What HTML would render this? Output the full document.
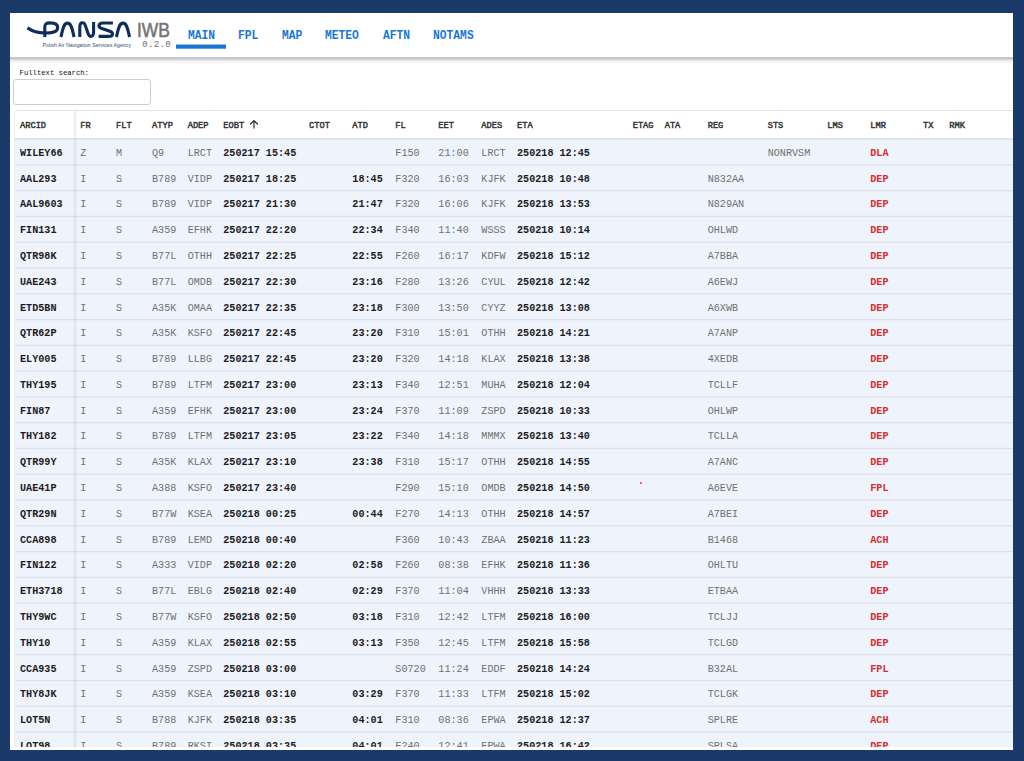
<!DOCTYPE html>
<html><head><meta charset="utf-8"><title>IWB</title>
<style>
html,body{margin:0;padding:0;}
body{width:1024px;height:761px;overflow:hidden;background:#1b3a69;position:relative;font-family:"Liberation Mono",monospace;}
#panel{position:absolute;left:10px;top:13px;width:1003px;height:737px;background:#fff;overflow:hidden;}
#topbar{position:absolute;left:0;top:0;width:1003px;height:44px;background:#fff;z-index:5;}
#shd{position:absolute;left:0;top:44px;width:1003px;height:8px;z-index:5;background:linear-gradient(to bottom,rgba(0,0,0,.20) 0,rgba(0,0,0,.235) 1px,rgba(0,0,0,.22) 2px,rgba(0,0,0,.10) 3px,rgba(0,0,0,.05) 4.5px,rgba(0,0,0,.02) 6px,rgba(0,0,0,0) 8px)}
.nav{position:absolute;top:16.6px;transform:scaleY(1.17);transform-origin:0 50%;font-size:11.3px;font-weight:bold;color:#1976d2;letter-spacing:0;line-height:13px;white-space:nowrap;}
#ul{position:absolute;left:166px;top:31px;width:50px;height:5px;background:linear-gradient(to bottom,rgba(25,118,210,.45) 0,rgba(25,118,210,.45) 1px,#1976d2 1px,#1976d2 4px,rgba(25,118,210,.7) 4px,rgba(25,118,210,.7) 5px);}
#iwb{position:absolute;left:127.1px;top:4.6px;font-family:"Liberation Sans",sans-serif;font-size:20.2px;line-height:24px;color:#757575;-webkit-text-stroke:.6px #757575;transform:scaleX(.861);transform-origin:0 0;letter-spacing:0}
#ver{position:absolute;left:132.3px;top:26.8px;font-size:9px;line-height:10px;color:#6f6f6f;letter-spacing:.35px}
#tag{position:absolute;left:32.6px;top:28.7px;font-family:"Liberation Sans",sans-serif;font-size:5.25px;line-height:6px;color:#354d7a;white-space:nowrap}
#lbl{position:absolute;left:9.6px;top:54.8px;font-size:7.22px;line-height:10px;color:#111;white-space:nowrap;transform:scaleY(1.08);transform-origin:0 50%}
#inp{position:absolute;left:3px;top:66px;width:136px;height:24px;border:1px solid #cdcdcd;border-radius:3px;background:#fff;box-sizing:content-box}
#tbl{position:absolute;left:4px;top:97px;width:1010px;height:637.3px;overflow:hidden;border-left:1px solid #efefef;border-top-left-radius:4px;box-sizing:border-box}
.hr{position:absolute;left:-1px;width:1010px;border-top-left-radius:4px;background:#fff;border-top:1px solid #e3e3e3;border-bottom:2px solid #e3e4e5;box-sizing:border-box}
.r{position:absolute;left:-1px;width:1010px}
.l{position:absolute;left:-1px;width:1010px;height:1px;background:#000}
#body{position:absolute;left:-1px;width:1010px;top:30px;height:620px;background:#eef3fc}
.c{position:absolute;white-space:nowrap;transform:scaleY(1.05);transform-origin:0 73%}
.h{font-weight:normal;color:#333;-webkit-text-stroke:.42px #333;transform:scaleY(1.11);transform-origin:0 62%}
.b{font-weight:bold;color:#1c1c1c;}
.n{color:#707070;}
.r_{font-weight:bold;color:#d32f2f;}
#vsep{position:absolute;left:59px;top:1px;width:3px;height:640px;background:linear-gradient(to right,rgba(0,0,0,.075) 0,rgba(0,0,0,.06) 50%,rgba(0,0,0,0) 100%);z-index:3}
</style></head><body>
<div id="panel">
<div id="topbar"><svg id="logo" style="position:absolute;left:0;top:0" width="140" height="44" viewBox="10 13 140 44">
<g fill="none" stroke="#0e2d5b" stroke-width="3.1" stroke-linecap="butt" stroke-linejoin="round">
<path d="M27.4 27.9 C 32 31, 38 33, 44.8 33 C 52 33, 57.7 31.6, 57.7 27.7 C 57.7 24, 54 22.9, 50 22.9 C 46 22.9, 44.8 24, 44.8 27 L 44.8 37"/>
<path d="M60.9 37 C 62.5 31, 63.2 23.1, 67.5 23.1 C 71.8 23.1, 72.5 31, 74.1 37"/>
<path d="M79.8 37 L79.8 27 C 79.8 21.6, 84 21.9, 85.2 25.2 L 88.3 33.9 C 89.5 37.3, 93.6 37.5, 93.6 32 L 93.6 22.1"/>
<path d="M112.9 23 L 103.4 23 C 100.3 23, 99 24.2, 99 25.8 C 99 27.4, 100.2 28.1, 102.6 28.8 L 109.2 31 C 111.6 31.8, 112.5 32.6, 112.5 33.9 C 112.5 35.5, 111.2 36.4, 108.6 36.4 L 98.6 36.4"/>
<path d="M116.4 37 C 118 31, 118.7 23.1, 123 23.1 C 127.3 23.1, 128 31, 129.6 37"/>
</g></svg><div id="tag">Polish Air Navigation Services Agency</div><div id="iwb">IWB</div><div id="ver">0.2.0</div><div class="nav" style="left:178px">MAIN</div><div class="nav" style="left:228px">FPL</div><div class="nav" style="left:272px">MAP</div><div class="nav" style="left:315px">METEO</div><div class="nav" style="left:373px">AFTN</div><div class="nav" style="left:423px">NOTAMS</div><div id="ul"></div></div>
<div id="shd"></div><div id="lbl">Fulltext search:</div><div id="inp"></div>
<div id="tbl"><div id="vsep"></div>
<div class="hr" style="top:0;height:29.72px"><span class="c h" style="left:6.00px;top:10.26px;font-size:8.7px;line-height:11px">ARCID</span><span class="c h" style="left:66.30px;top:10.26px;font-size:8.7px;line-height:11px">FR</span><span class="c h" style="left:102.00px;top:10.26px;font-size:8.7px;line-height:11px">FLT</span><span class="c h" style="left:138.00px;top:10.26px;font-size:8.7px;line-height:11px">ATYP</span><span class="c h" style="left:173.70px;top:10.26px;font-size:8.7px;line-height:11px">ADEP</span><span class="c h" style="left:209.30px;top:10.26px;font-size:8.7px;line-height:11px">EOBT</span><span class="c h" style="left:295.00px;top:10.26px;font-size:8.7px;line-height:11px">CTOT</span><span class="c h" style="left:338.35px;top:10.26px;font-size:8.7px;line-height:11px">ATD</span><span class="c h" style="left:381.35px;top:10.26px;font-size:8.7px;line-height:11px">FL</span><span class="c h" style="left:424.35px;top:10.26px;font-size:8.7px;line-height:11px">EET</span><span class="c h" style="left:467.35px;top:10.26px;font-size:8.7px;line-height:11px">ADES</span><span class="c h" style="left:503.00px;top:10.26px;font-size:8.7px;line-height:11px">ETA</span><span class="c h" style="left:618.70px;top:10.26px;font-size:8.7px;line-height:11px">ETAG</span><span class="c h" style="left:650.70px;top:10.26px;font-size:8.7px;line-height:11px">ATA</span><span class="c h" style="left:693.70px;top:10.26px;font-size:8.7px;line-height:11px">REG</span><span class="c h" style="left:753.70px;top:10.26px;font-size:8.7px;line-height:11px">STS</span><span class="c h" style="left:813.30px;top:10.26px;font-size:8.7px;line-height:11px">LMS</span><span class="c h" style="left:856.30px;top:10.26px;font-size:8.7px;line-height:11px">LMR</span><span class="c h" style="left:909.00px;top:10.26px;font-size:8.7px;line-height:11px">TX</span><span class="c h" style="left:935.30px;top:10.26px;font-size:8.7px;line-height:11px">RMK</span><svg style="position:absolute;left:235.2px;top:8.2px" width="10" height="11" viewBox="0 0 10 11"><path d="M5 9.6V1.6M1.1 5.5L5 1.6L8.9 5.5" fill="none" stroke="#2a2a2a" stroke-width="1.15"/></svg></div>
<div id="body"></div>
<div class="l" style="top:54px;opacity:0.052"></div><div class="l" style="top:55px;opacity:0.039"></div><div class="l" style="top:79px;opacity:0.001"></div><div class="l" style="top:80px;opacity:0.065"></div><div class="l" style="top:81px;opacity:0.025"></div><div class="l" style="top:105px;opacity:0.016"></div><div class="l" style="top:106px;opacity:0.065"></div><div class="l" style="top:107px;opacity:0.010"></div><div class="l" style="top:131px;opacity:0.030"></div><div class="l" style="top:132px;opacity:0.061"></div><div class="l" style="top:157px;opacity:0.044"></div><div class="l" style="top:158px;opacity:0.047"></div><div class="l" style="top:183px;opacity:0.058"></div><div class="l" style="top:184px;opacity:0.033"></div><div class="l" style="top:208px;opacity:0.008"></div><div class="l" style="top:209px;opacity:0.065"></div><div class="l" style="top:210px;opacity:0.018"></div><div class="l" style="top:234px;opacity:0.022"></div><div class="l" style="top:235px;opacity:0.065"></div><div class="l" style="top:236px;opacity:0.004"></div><div class="l" style="top:260px;opacity:0.036"></div><div class="l" style="top:261px;opacity:0.055"></div><div class="l" style="top:286px;opacity:0.051"></div><div class="l" style="top:287px;opacity:0.040"></div><div class="l" style="top:312px;opacity:0.065"></div><div class="l" style="top:313px;opacity:0.026"></div><div class="l" style="top:337px;opacity:0.014"></div><div class="l" style="top:338px;opacity:0.065"></div><div class="l" style="top:339px;opacity:0.012"></div><div class="l" style="top:363px;opacity:0.029"></div><div class="l" style="top:364px;opacity:0.062"></div><div class="l" style="top:389px;opacity:0.043"></div><div class="l" style="top:390px;opacity:0.048"></div><div class="l" style="top:415px;opacity:0.057"></div><div class="l" style="top:416px;opacity:0.034"></div><div class="l" style="top:440px;opacity:0.006"></div><div class="l" style="top:441px;opacity:0.065"></div><div class="l" style="top:442px;opacity:0.020"></div><div class="l" style="top:466px;opacity:0.021"></div><div class="l" style="top:467px;opacity:0.065"></div><div class="l" style="top:468px;opacity:0.005"></div><div class="l" style="top:492px;opacity:0.035"></div><div class="l" style="top:493px;opacity:0.056"></div><div class="l" style="top:518px;opacity:0.049"></div><div class="l" style="top:519px;opacity:0.042"></div><div class="l" style="top:544px;opacity:0.064"></div><div class="l" style="top:545px;opacity:0.027"></div><div class="l" style="top:569px;opacity:0.013"></div><div class="l" style="top:570px;opacity:0.065"></div><div class="l" style="top:571px;opacity:0.013"></div><div class="l" style="top:595px;opacity:0.027"></div><div class="l" style="top:596px;opacity:0.064"></div><div class="l" style="top:621px;opacity:0.042"></div><div class="l" style="top:622px;opacity:0.049"></div><div class="l" style="top:647px;opacity:0.056"></div><div class="l" style="top:648px;opacity:0.035"></div>
<div class="r" style="top:29.72px;height:25.78px"><span class="c b" style="left:6.00px;top:8.19px;font-size:10.15px;line-height:12px">WILEY66</span><span class="c n" style="left:66.30px;top:8.19px;font-size:10.15px;line-height:12px">Z</span><span class="c n" style="left:102.00px;top:8.19px;font-size:10.15px;line-height:12px">M</span><span class="c n" style="left:138.00px;top:8.19px;font-size:10.15px;line-height:12px">Q9</span><span class="c n" style="left:173.70px;top:8.19px;font-size:10.15px;line-height:12px">LRCT</span><span class="c b" style="left:209.30px;top:8.19px;font-size:10.15px;line-height:12px">250217 15:45</span><span class="c n" style="left:381.35px;top:8.19px;font-size:10.15px;line-height:12px">F150</span><span class="c n" style="left:424.35px;top:8.19px;font-size:10.15px;line-height:12px">21:00</span><span class="c n" style="left:467.35px;top:8.19px;font-size:10.15px;line-height:12px">LRCT</span><span class="c b" style="left:503.00px;top:8.19px;font-size:10.15px;line-height:12px">250218 12:45</span><span class="c n" style="left:753.70px;top:8.19px;font-size:10.15px;line-height:12px">NONRVSM</span><span class="c r_" style="left:856.30px;top:8.19px;font-size:10.15px;line-height:12px">DLA</span></div>
<div class="r" style="top:55.50px;height:25.78px"><span class="c b" style="left:6.00px;top:8.19px;font-size:10.15px;line-height:12px">AAL293</span><span class="c n" style="left:66.30px;top:8.19px;font-size:10.15px;line-height:12px">I</span><span class="c n" style="left:102.00px;top:8.19px;font-size:10.15px;line-height:12px">S</span><span class="c n" style="left:138.00px;top:8.19px;font-size:10.15px;line-height:12px">B789</span><span class="c n" style="left:173.70px;top:8.19px;font-size:10.15px;line-height:12px">VIDP</span><span class="c b" style="left:209.30px;top:8.19px;font-size:10.15px;line-height:12px">250217 18:25</span><span class="c b" style="left:338.35px;top:8.19px;font-size:10.15px;line-height:12px">18:45</span><span class="c n" style="left:381.35px;top:8.19px;font-size:10.15px;line-height:12px">F320</span><span class="c n" style="left:424.35px;top:8.19px;font-size:10.15px;line-height:12px">16:03</span><span class="c n" style="left:467.35px;top:8.19px;font-size:10.15px;line-height:12px">KJFK</span><span class="c b" style="left:503.00px;top:8.19px;font-size:10.15px;line-height:12px">250218 10:48</span><span class="c n" style="left:693.70px;top:8.19px;font-size:10.15px;line-height:12px">N832AA</span><span class="c r_" style="left:856.30px;top:8.19px;font-size:10.15px;line-height:12px">DEP</span></div>
<div class="r" style="top:81.28px;height:25.78px"><span class="c b" style="left:6.00px;top:8.19px;font-size:10.15px;line-height:12px">AAL9603</span><span class="c n" style="left:66.30px;top:8.19px;font-size:10.15px;line-height:12px">I</span><span class="c n" style="left:102.00px;top:8.19px;font-size:10.15px;line-height:12px">S</span><span class="c n" style="left:138.00px;top:8.19px;font-size:10.15px;line-height:12px">B789</span><span class="c n" style="left:173.70px;top:8.19px;font-size:10.15px;line-height:12px">VIDP</span><span class="c b" style="left:209.30px;top:8.19px;font-size:10.15px;line-height:12px">250217 21:30</span><span class="c b" style="left:338.35px;top:8.19px;font-size:10.15px;line-height:12px">21:47</span><span class="c n" style="left:381.35px;top:8.19px;font-size:10.15px;line-height:12px">F320</span><span class="c n" style="left:424.35px;top:8.19px;font-size:10.15px;line-height:12px">16:06</span><span class="c n" style="left:467.35px;top:8.19px;font-size:10.15px;line-height:12px">KJFK</span><span class="c b" style="left:503.00px;top:8.19px;font-size:10.15px;line-height:12px">250218 13:53</span><span class="c n" style="left:693.70px;top:8.19px;font-size:10.15px;line-height:12px">N829AN</span><span class="c r_" style="left:856.30px;top:8.19px;font-size:10.15px;line-height:12px">DEP</span></div>
<div class="r" style="top:107.06px;height:25.78px"><span class="c b" style="left:6.00px;top:8.19px;font-size:10.15px;line-height:12px">FIN131</span><span class="c n" style="left:66.30px;top:8.19px;font-size:10.15px;line-height:12px">I</span><span class="c n" style="left:102.00px;top:8.19px;font-size:10.15px;line-height:12px">S</span><span class="c n" style="left:138.00px;top:8.19px;font-size:10.15px;line-height:12px">A359</span><span class="c n" style="left:173.70px;top:8.19px;font-size:10.15px;line-height:12px">EFHK</span><span class="c b" style="left:209.30px;top:8.19px;font-size:10.15px;line-height:12px">250217 22:20</span><span class="c b" style="left:338.35px;top:8.19px;font-size:10.15px;line-height:12px">22:34</span><span class="c n" style="left:381.35px;top:8.19px;font-size:10.15px;line-height:12px">F340</span><span class="c n" style="left:424.35px;top:8.19px;font-size:10.15px;line-height:12px">11:40</span><span class="c n" style="left:467.35px;top:8.19px;font-size:10.15px;line-height:12px">WSSS</span><span class="c b" style="left:503.00px;top:8.19px;font-size:10.15px;line-height:12px">250218 10:14</span><span class="c n" style="left:693.70px;top:8.19px;font-size:10.15px;line-height:12px">OHLWD</span><span class="c r_" style="left:856.30px;top:8.19px;font-size:10.15px;line-height:12px">DEP</span></div>
<div class="r" style="top:132.84px;height:25.78px"><span class="c b" style="left:6.00px;top:8.19px;font-size:10.15px;line-height:12px">QTR98K</span><span class="c n" style="left:66.30px;top:8.19px;font-size:10.15px;line-height:12px">I</span><span class="c n" style="left:102.00px;top:8.19px;font-size:10.15px;line-height:12px">S</span><span class="c n" style="left:138.00px;top:8.19px;font-size:10.15px;line-height:12px">B77L</span><span class="c n" style="left:173.70px;top:8.19px;font-size:10.15px;line-height:12px">OTHH</span><span class="c b" style="left:209.30px;top:8.19px;font-size:10.15px;line-height:12px">250217 22:25</span><span class="c b" style="left:338.35px;top:8.19px;font-size:10.15px;line-height:12px">22:55</span><span class="c n" style="left:381.35px;top:8.19px;font-size:10.15px;line-height:12px">F260</span><span class="c n" style="left:424.35px;top:8.19px;font-size:10.15px;line-height:12px">16:17</span><span class="c n" style="left:467.35px;top:8.19px;font-size:10.15px;line-height:12px">KDFW</span><span class="c b" style="left:503.00px;top:8.19px;font-size:10.15px;line-height:12px">250218 15:12</span><span class="c n" style="left:693.70px;top:8.19px;font-size:10.15px;line-height:12px">A7BBA</span><span class="c r_" style="left:856.30px;top:8.19px;font-size:10.15px;line-height:12px">DEP</span></div>
<div class="r" style="top:158.62px;height:25.78px"><span class="c b" style="left:6.00px;top:8.19px;font-size:10.15px;line-height:12px">UAE243</span><span class="c n" style="left:66.30px;top:8.19px;font-size:10.15px;line-height:12px">I</span><span class="c n" style="left:102.00px;top:8.19px;font-size:10.15px;line-height:12px">S</span><span class="c n" style="left:138.00px;top:8.19px;font-size:10.15px;line-height:12px">B77L</span><span class="c n" style="left:173.70px;top:8.19px;font-size:10.15px;line-height:12px">OMDB</span><span class="c b" style="left:209.30px;top:8.19px;font-size:10.15px;line-height:12px">250217 22:30</span><span class="c b" style="left:338.35px;top:8.19px;font-size:10.15px;line-height:12px">23:16</span><span class="c n" style="left:381.35px;top:8.19px;font-size:10.15px;line-height:12px">F280</span><span class="c n" style="left:424.35px;top:8.19px;font-size:10.15px;line-height:12px">13:26</span><span class="c n" style="left:467.35px;top:8.19px;font-size:10.15px;line-height:12px">CYUL</span><span class="c b" style="left:503.00px;top:8.19px;font-size:10.15px;line-height:12px">250218 12:42</span><span class="c n" style="left:693.70px;top:8.19px;font-size:10.15px;line-height:12px">A6EWJ</span><span class="c r_" style="left:856.30px;top:8.19px;font-size:10.15px;line-height:12px">DEP</span></div>
<div class="r" style="top:184.40px;height:25.78px"><span class="c b" style="left:6.00px;top:8.19px;font-size:10.15px;line-height:12px">ETD5BN</span><span class="c n" style="left:66.30px;top:8.19px;font-size:10.15px;line-height:12px">I</span><span class="c n" style="left:102.00px;top:8.19px;font-size:10.15px;line-height:12px">S</span><span class="c n" style="left:138.00px;top:8.19px;font-size:10.15px;line-height:12px">A35K</span><span class="c n" style="left:173.70px;top:8.19px;font-size:10.15px;line-height:12px">OMAA</span><span class="c b" style="left:209.30px;top:8.19px;font-size:10.15px;line-height:12px">250217 22:35</span><span class="c b" style="left:338.35px;top:8.19px;font-size:10.15px;line-height:12px">23:18</span><span class="c n" style="left:381.35px;top:8.19px;font-size:10.15px;line-height:12px">F300</span><span class="c n" style="left:424.35px;top:8.19px;font-size:10.15px;line-height:12px">13:50</span><span class="c n" style="left:467.35px;top:8.19px;font-size:10.15px;line-height:12px">CYYZ</span><span class="c b" style="left:503.00px;top:8.19px;font-size:10.15px;line-height:12px">250218 13:08</span><span class="c n" style="left:693.70px;top:8.19px;font-size:10.15px;line-height:12px">A6XWB</span><span class="c r_" style="left:856.30px;top:8.19px;font-size:10.15px;line-height:12px">DEP</span></div>
<div class="r" style="top:210.18px;height:25.78px"><span class="c b" style="left:6.00px;top:8.19px;font-size:10.15px;line-height:12px">QTR62P</span><span class="c n" style="left:66.30px;top:8.19px;font-size:10.15px;line-height:12px">I</span><span class="c n" style="left:102.00px;top:8.19px;font-size:10.15px;line-height:12px">S</span><span class="c n" style="left:138.00px;top:8.19px;font-size:10.15px;line-height:12px">A35K</span><span class="c n" style="left:173.70px;top:8.19px;font-size:10.15px;line-height:12px">KSFO</span><span class="c b" style="left:209.30px;top:8.19px;font-size:10.15px;line-height:12px">250217 22:45</span><span class="c b" style="left:338.35px;top:8.19px;font-size:10.15px;line-height:12px">23:20</span><span class="c n" style="left:381.35px;top:8.19px;font-size:10.15px;line-height:12px">F310</span><span class="c n" style="left:424.35px;top:8.19px;font-size:10.15px;line-height:12px">15:01</span><span class="c n" style="left:467.35px;top:8.19px;font-size:10.15px;line-height:12px">OTHH</span><span class="c b" style="left:503.00px;top:8.19px;font-size:10.15px;line-height:12px">250218 14:21</span><span class="c n" style="left:693.70px;top:8.19px;font-size:10.15px;line-height:12px">A7ANP</span><span class="c r_" style="left:856.30px;top:8.19px;font-size:10.15px;line-height:12px">DEP</span></div>
<div class="r" style="top:235.96px;height:25.78px"><span class="c b" style="left:6.00px;top:8.19px;font-size:10.15px;line-height:12px">ELY005</span><span class="c n" style="left:66.30px;top:8.19px;font-size:10.15px;line-height:12px">I</span><span class="c n" style="left:102.00px;top:8.19px;font-size:10.15px;line-height:12px">S</span><span class="c n" style="left:138.00px;top:8.19px;font-size:10.15px;line-height:12px">B789</span><span class="c n" style="left:173.70px;top:8.19px;font-size:10.15px;line-height:12px">LLBG</span><span class="c b" style="left:209.30px;top:8.19px;font-size:10.15px;line-height:12px">250217 22:45</span><span class="c b" style="left:338.35px;top:8.19px;font-size:10.15px;line-height:12px">23:20</span><span class="c n" style="left:381.35px;top:8.19px;font-size:10.15px;line-height:12px">F320</span><span class="c n" style="left:424.35px;top:8.19px;font-size:10.15px;line-height:12px">14:18</span><span class="c n" style="left:467.35px;top:8.19px;font-size:10.15px;line-height:12px">KLAX</span><span class="c b" style="left:503.00px;top:8.19px;font-size:10.15px;line-height:12px">250218 13:38</span><span class="c n" style="left:693.70px;top:8.19px;font-size:10.15px;line-height:12px">4XEDB</span><span class="c r_" style="left:856.30px;top:8.19px;font-size:10.15px;line-height:12px">DEP</span></div>
<div class="r" style="top:261.74px;height:25.78px"><span class="c b" style="left:6.00px;top:8.19px;font-size:10.15px;line-height:12px">THY195</span><span class="c n" style="left:66.30px;top:8.19px;font-size:10.15px;line-height:12px">I</span><span class="c n" style="left:102.00px;top:8.19px;font-size:10.15px;line-height:12px">S</span><span class="c n" style="left:138.00px;top:8.19px;font-size:10.15px;line-height:12px">B789</span><span class="c n" style="left:173.70px;top:8.19px;font-size:10.15px;line-height:12px">LTFM</span><span class="c b" style="left:209.30px;top:8.19px;font-size:10.15px;line-height:12px">250217 23:00</span><span class="c b" style="left:338.35px;top:8.19px;font-size:10.15px;line-height:12px">23:13</span><span class="c n" style="left:381.35px;top:8.19px;font-size:10.15px;line-height:12px">F340</span><span class="c n" style="left:424.35px;top:8.19px;font-size:10.15px;line-height:12px">12:51</span><span class="c n" style="left:467.35px;top:8.19px;font-size:10.15px;line-height:12px">MUHA</span><span class="c b" style="left:503.00px;top:8.19px;font-size:10.15px;line-height:12px">250218 12:04</span><span class="c n" style="left:693.70px;top:8.19px;font-size:10.15px;line-height:12px">TCLLF</span><span class="c r_" style="left:856.30px;top:8.19px;font-size:10.15px;line-height:12px">DEP</span></div>
<div class="r" style="top:287.52px;height:25.78px"><span class="c b" style="left:6.00px;top:8.19px;font-size:10.15px;line-height:12px">FIN87</span><span class="c n" style="left:66.30px;top:8.19px;font-size:10.15px;line-height:12px">I</span><span class="c n" style="left:102.00px;top:8.19px;font-size:10.15px;line-height:12px">S</span><span class="c n" style="left:138.00px;top:8.19px;font-size:10.15px;line-height:12px">A359</span><span class="c n" style="left:173.70px;top:8.19px;font-size:10.15px;line-height:12px">EFHK</span><span class="c b" style="left:209.30px;top:8.19px;font-size:10.15px;line-height:12px">250217 23:00</span><span class="c b" style="left:338.35px;top:8.19px;font-size:10.15px;line-height:12px">23:24</span><span class="c n" style="left:381.35px;top:8.19px;font-size:10.15px;line-height:12px">F370</span><span class="c n" style="left:424.35px;top:8.19px;font-size:10.15px;line-height:12px">11:09</span><span class="c n" style="left:467.35px;top:8.19px;font-size:10.15px;line-height:12px">ZSPD</span><span class="c b" style="left:503.00px;top:8.19px;font-size:10.15px;line-height:12px">250218 10:33</span><span class="c n" style="left:693.70px;top:8.19px;font-size:10.15px;line-height:12px">OHLWP</span><span class="c r_" style="left:856.30px;top:8.19px;font-size:10.15px;line-height:12px">DEP</span></div>
<div class="r" style="top:313.30px;height:25.78px"><span class="c b" style="left:6.00px;top:8.19px;font-size:10.15px;line-height:12px">THY182</span><span class="c n" style="left:66.30px;top:8.19px;font-size:10.15px;line-height:12px">I</span><span class="c n" style="left:102.00px;top:8.19px;font-size:10.15px;line-height:12px">S</span><span class="c n" style="left:138.00px;top:8.19px;font-size:10.15px;line-height:12px">B789</span><span class="c n" style="left:173.70px;top:8.19px;font-size:10.15px;line-height:12px">LTFM</span><span class="c b" style="left:209.30px;top:8.19px;font-size:10.15px;line-height:12px">250217 23:05</span><span class="c b" style="left:338.35px;top:8.19px;font-size:10.15px;line-height:12px">23:22</span><span class="c n" style="left:381.35px;top:8.19px;font-size:10.15px;line-height:12px">F340</span><span class="c n" style="left:424.35px;top:8.19px;font-size:10.15px;line-height:12px">14:18</span><span class="c n" style="left:467.35px;top:8.19px;font-size:10.15px;line-height:12px">MMMX</span><span class="c b" style="left:503.00px;top:8.19px;font-size:10.15px;line-height:12px">250218 13:40</span><span class="c n" style="left:693.70px;top:8.19px;font-size:10.15px;line-height:12px">TCLLA</span><span class="c r_" style="left:856.30px;top:8.19px;font-size:10.15px;line-height:12px">DEP</span></div>
<div class="r" style="top:339.08px;height:25.78px"><span class="c b" style="left:6.00px;top:8.19px;font-size:10.15px;line-height:12px">QTR99Y</span><span class="c n" style="left:66.30px;top:8.19px;font-size:10.15px;line-height:12px">I</span><span class="c n" style="left:102.00px;top:8.19px;font-size:10.15px;line-height:12px">S</span><span class="c n" style="left:138.00px;top:8.19px;font-size:10.15px;line-height:12px">A35K</span><span class="c n" style="left:173.70px;top:8.19px;font-size:10.15px;line-height:12px">KLAX</span><span class="c b" style="left:209.30px;top:8.19px;font-size:10.15px;line-height:12px">250217 23:10</span><span class="c b" style="left:338.35px;top:8.19px;font-size:10.15px;line-height:12px">23:38</span><span class="c n" style="left:381.35px;top:8.19px;font-size:10.15px;line-height:12px">F310</span><span class="c n" style="left:424.35px;top:8.19px;font-size:10.15px;line-height:12px">15:17</span><span class="c n" style="left:467.35px;top:8.19px;font-size:10.15px;line-height:12px">OTHH</span><span class="c b" style="left:503.00px;top:8.19px;font-size:10.15px;line-height:12px">250218 14:55</span><span class="c n" style="left:693.70px;top:8.19px;font-size:10.15px;line-height:12px">A7ANC</span><span class="c r_" style="left:856.30px;top:8.19px;font-size:10.15px;line-height:12px">DEP</span></div>
<div class="r" style="top:364.86px;height:25.78px"><span class="c b" style="left:6.00px;top:8.19px;font-size:10.15px;line-height:12px">UAE41P</span><span class="c n" style="left:66.30px;top:8.19px;font-size:10.15px;line-height:12px">I</span><span class="c n" style="left:102.00px;top:8.19px;font-size:10.15px;line-height:12px">S</span><span class="c n" style="left:138.00px;top:8.19px;font-size:10.15px;line-height:12px">A388</span><span class="c n" style="left:173.70px;top:8.19px;font-size:10.15px;line-height:12px">KSFO</span><span class="c b" style="left:209.30px;top:8.19px;font-size:10.15px;line-height:12px">250217 23:40</span><span class="c n" style="left:381.35px;top:8.19px;font-size:10.15px;line-height:12px">F290</span><span class="c n" style="left:424.35px;top:8.19px;font-size:10.15px;line-height:12px">15:10</span><span class="c n" style="left:467.35px;top:8.19px;font-size:10.15px;line-height:12px">OMDB</span><span class="c b" style="left:503.00px;top:8.19px;font-size:10.15px;line-height:12px">250218 14:50</span><span class="c n" style="left:693.70px;top:8.19px;font-size:10.15px;line-height:12px">A6EVE</span><span class="c r_" style="left:856.30px;top:8.19px;font-size:10.15px;line-height:12px">FPL</span><span style="position:absolute;left:626px;top:6.8px;width:2px;height:2px;background:#e53935;border-radius:1px"></span></div>
<div class="r" style="top:390.64px;height:25.78px"><span class="c b" style="left:6.00px;top:8.19px;font-size:10.15px;line-height:12px">QTR29N</span><span class="c n" style="left:66.30px;top:8.19px;font-size:10.15px;line-height:12px">I</span><span class="c n" style="left:102.00px;top:8.19px;font-size:10.15px;line-height:12px">S</span><span class="c n" style="left:138.00px;top:8.19px;font-size:10.15px;line-height:12px">B77W</span><span class="c n" style="left:173.70px;top:8.19px;font-size:10.15px;line-height:12px">KSEA</span><span class="c b" style="left:209.30px;top:8.19px;font-size:10.15px;line-height:12px">250218 00:25</span><span class="c b" style="left:338.35px;top:8.19px;font-size:10.15px;line-height:12px">00:44</span><span class="c n" style="left:381.35px;top:8.19px;font-size:10.15px;line-height:12px">F270</span><span class="c n" style="left:424.35px;top:8.19px;font-size:10.15px;line-height:12px">14:13</span><span class="c n" style="left:467.35px;top:8.19px;font-size:10.15px;line-height:12px">OTHH</span><span class="c b" style="left:503.00px;top:8.19px;font-size:10.15px;line-height:12px">250218 14:57</span><span class="c n" style="left:693.70px;top:8.19px;font-size:10.15px;line-height:12px">A7BEI</span><span class="c r_" style="left:856.30px;top:8.19px;font-size:10.15px;line-height:12px">DEP</span></div>
<div class="r" style="top:416.42px;height:25.78px"><span class="c b" style="left:6.00px;top:8.19px;font-size:10.15px;line-height:12px">CCA898</span><span class="c n" style="left:66.30px;top:8.19px;font-size:10.15px;line-height:12px">I</span><span class="c n" style="left:102.00px;top:8.19px;font-size:10.15px;line-height:12px">S</span><span class="c n" style="left:138.00px;top:8.19px;font-size:10.15px;line-height:12px">B789</span><span class="c n" style="left:173.70px;top:8.19px;font-size:10.15px;line-height:12px">LEMD</span><span class="c b" style="left:209.30px;top:8.19px;font-size:10.15px;line-height:12px">250218 00:40</span><span class="c n" style="left:381.35px;top:8.19px;font-size:10.15px;line-height:12px">F360</span><span class="c n" style="left:424.35px;top:8.19px;font-size:10.15px;line-height:12px">10:43</span><span class="c n" style="left:467.35px;top:8.19px;font-size:10.15px;line-height:12px">ZBAA</span><span class="c b" style="left:503.00px;top:8.19px;font-size:10.15px;line-height:12px">250218 11:23</span><span class="c n" style="left:693.70px;top:8.19px;font-size:10.15px;line-height:12px">B1468</span><span class="c r_" style="left:856.30px;top:8.19px;font-size:10.15px;line-height:12px">ACH</span></div>
<div class="r" style="top:442.20px;height:25.78px"><span class="c b" style="left:6.00px;top:8.19px;font-size:10.15px;line-height:12px">FIN122</span><span class="c n" style="left:66.30px;top:8.19px;font-size:10.15px;line-height:12px">I</span><span class="c n" style="left:102.00px;top:8.19px;font-size:10.15px;line-height:12px">S</span><span class="c n" style="left:138.00px;top:8.19px;font-size:10.15px;line-height:12px">A333</span><span class="c n" style="left:173.70px;top:8.19px;font-size:10.15px;line-height:12px">VIDP</span><span class="c b" style="left:209.30px;top:8.19px;font-size:10.15px;line-height:12px">250218 02:20</span><span class="c b" style="left:338.35px;top:8.19px;font-size:10.15px;line-height:12px">02:58</span><span class="c n" style="left:381.35px;top:8.19px;font-size:10.15px;line-height:12px">F260</span><span class="c n" style="left:424.35px;top:8.19px;font-size:10.15px;line-height:12px">08:38</span><span class="c n" style="left:467.35px;top:8.19px;font-size:10.15px;line-height:12px">EFHK</span><span class="c b" style="left:503.00px;top:8.19px;font-size:10.15px;line-height:12px">250218 11:36</span><span class="c n" style="left:693.70px;top:8.19px;font-size:10.15px;line-height:12px">OHLTU</span><span class="c r_" style="left:856.30px;top:8.19px;font-size:10.15px;line-height:12px">DEP</span></div>
<div class="r" style="top:467.98px;height:25.78px"><span class="c b" style="left:6.00px;top:8.19px;font-size:10.15px;line-height:12px">ETH3718</span><span class="c n" style="left:66.30px;top:8.19px;font-size:10.15px;line-height:12px">I</span><span class="c n" style="left:102.00px;top:8.19px;font-size:10.15px;line-height:12px">S</span><span class="c n" style="left:138.00px;top:8.19px;font-size:10.15px;line-height:12px">B77L</span><span class="c n" style="left:173.70px;top:8.19px;font-size:10.15px;line-height:12px">EBLG</span><span class="c b" style="left:209.30px;top:8.19px;font-size:10.15px;line-height:12px">250218 02:40</span><span class="c b" style="left:338.35px;top:8.19px;font-size:10.15px;line-height:12px">02:29</span><span class="c n" style="left:381.35px;top:8.19px;font-size:10.15px;line-height:12px">F370</span><span class="c n" style="left:424.35px;top:8.19px;font-size:10.15px;line-height:12px">11:04</span><span class="c n" style="left:467.35px;top:8.19px;font-size:10.15px;line-height:12px">VHHH</span><span class="c b" style="left:503.00px;top:8.19px;font-size:10.15px;line-height:12px">250218 13:33</span><span class="c n" style="left:693.70px;top:8.19px;font-size:10.15px;line-height:12px">ETBAA</span><span class="c r_" style="left:856.30px;top:8.19px;font-size:10.15px;line-height:12px">DEP</span></div>
<div class="r" style="top:493.76px;height:25.78px"><span class="c b" style="left:6.00px;top:8.19px;font-size:10.15px;line-height:12px">THY9WC</span><span class="c n" style="left:66.30px;top:8.19px;font-size:10.15px;line-height:12px">I</span><span class="c n" style="left:102.00px;top:8.19px;font-size:10.15px;line-height:12px">S</span><span class="c n" style="left:138.00px;top:8.19px;font-size:10.15px;line-height:12px">B77W</span><span class="c n" style="left:173.70px;top:8.19px;font-size:10.15px;line-height:12px">KSFO</span><span class="c b" style="left:209.30px;top:8.19px;font-size:10.15px;line-height:12px">250218 02:50</span><span class="c b" style="left:338.35px;top:8.19px;font-size:10.15px;line-height:12px">03:18</span><span class="c n" style="left:381.35px;top:8.19px;font-size:10.15px;line-height:12px">F310</span><span class="c n" style="left:424.35px;top:8.19px;font-size:10.15px;line-height:12px">12:42</span><span class="c n" style="left:467.35px;top:8.19px;font-size:10.15px;line-height:12px">LTFM</span><span class="c b" style="left:503.00px;top:8.19px;font-size:10.15px;line-height:12px">250218 16:00</span><span class="c n" style="left:693.70px;top:8.19px;font-size:10.15px;line-height:12px">TCLJJ</span><span class="c r_" style="left:856.30px;top:8.19px;font-size:10.15px;line-height:12px">DEP</span></div>
<div class="r" style="top:519.54px;height:25.78px"><span class="c b" style="left:6.00px;top:8.19px;font-size:10.15px;line-height:12px">THY10</span><span class="c n" style="left:66.30px;top:8.19px;font-size:10.15px;line-height:12px">I</span><span class="c n" style="left:102.00px;top:8.19px;font-size:10.15px;line-height:12px">S</span><span class="c n" style="left:138.00px;top:8.19px;font-size:10.15px;line-height:12px">A359</span><span class="c n" style="left:173.70px;top:8.19px;font-size:10.15px;line-height:12px">KLAX</span><span class="c b" style="left:209.30px;top:8.19px;font-size:10.15px;line-height:12px">250218 02:55</span><span class="c b" style="left:338.35px;top:8.19px;font-size:10.15px;line-height:12px">03:13</span><span class="c n" style="left:381.35px;top:8.19px;font-size:10.15px;line-height:12px">F350</span><span class="c n" style="left:424.35px;top:8.19px;font-size:10.15px;line-height:12px">12:45</span><span class="c n" style="left:467.35px;top:8.19px;font-size:10.15px;line-height:12px">LTFM</span><span class="c b" style="left:503.00px;top:8.19px;font-size:10.15px;line-height:12px">250218 15:58</span><span class="c n" style="left:693.70px;top:8.19px;font-size:10.15px;line-height:12px">TCLGD</span><span class="c r_" style="left:856.30px;top:8.19px;font-size:10.15px;line-height:12px">DEP</span></div>
<div class="r" style="top:545.32px;height:25.78px"><span class="c b" style="left:6.00px;top:8.19px;font-size:10.15px;line-height:12px">CCA935</span><span class="c n" style="left:66.30px;top:8.19px;font-size:10.15px;line-height:12px">I</span><span class="c n" style="left:102.00px;top:8.19px;font-size:10.15px;line-height:12px">S</span><span class="c n" style="left:138.00px;top:8.19px;font-size:10.15px;line-height:12px">A359</span><span class="c n" style="left:173.70px;top:8.19px;font-size:10.15px;line-height:12px">ZSPD</span><span class="c b" style="left:209.30px;top:8.19px;font-size:10.15px;line-height:12px">250218 03:00</span><span class="c n" style="left:381.35px;top:8.19px;font-size:10.15px;line-height:12px">S0720</span><span class="c n" style="left:424.35px;top:8.19px;font-size:10.15px;line-height:12px">11:24</span><span class="c n" style="left:467.35px;top:8.19px;font-size:10.15px;line-height:12px">EDDF</span><span class="c b" style="left:503.00px;top:8.19px;font-size:10.15px;line-height:12px">250218 14:24</span><span class="c n" style="left:693.70px;top:8.19px;font-size:10.15px;line-height:12px">B32AL</span><span class="c r_" style="left:856.30px;top:8.19px;font-size:10.15px;line-height:12px">FPL</span></div>
<div class="r" style="top:571.10px;height:25.78px"><span class="c b" style="left:6.00px;top:8.19px;font-size:10.15px;line-height:12px">THY8JK</span><span class="c n" style="left:66.30px;top:8.19px;font-size:10.15px;line-height:12px">I</span><span class="c n" style="left:102.00px;top:8.19px;font-size:10.15px;line-height:12px">S</span><span class="c n" style="left:138.00px;top:8.19px;font-size:10.15px;line-height:12px">A359</span><span class="c n" style="left:173.70px;top:8.19px;font-size:10.15px;line-height:12px">KSEA</span><span class="c b" style="left:209.30px;top:8.19px;font-size:10.15px;line-height:12px">250218 03:10</span><span class="c b" style="left:338.35px;top:8.19px;font-size:10.15px;line-height:12px">03:29</span><span class="c n" style="left:381.35px;top:8.19px;font-size:10.15px;line-height:12px">F370</span><span class="c n" style="left:424.35px;top:8.19px;font-size:10.15px;line-height:12px">11:33</span><span class="c n" style="left:467.35px;top:8.19px;font-size:10.15px;line-height:12px">LTFM</span><span class="c b" style="left:503.00px;top:8.19px;font-size:10.15px;line-height:12px">250218 15:02</span><span class="c n" style="left:693.70px;top:8.19px;font-size:10.15px;line-height:12px">TCLGK</span><span class="c r_" style="left:856.30px;top:8.19px;font-size:10.15px;line-height:12px">DEP</span></div>
<div class="r" style="top:596.88px;height:25.78px"><span class="c b" style="left:6.00px;top:8.19px;font-size:10.15px;line-height:12px">LOT5N</span><span class="c n" style="left:66.30px;top:8.19px;font-size:10.15px;line-height:12px">I</span><span class="c n" style="left:102.00px;top:8.19px;font-size:10.15px;line-height:12px">S</span><span class="c n" style="left:138.00px;top:8.19px;font-size:10.15px;line-height:12px">B788</span><span class="c n" style="left:173.70px;top:8.19px;font-size:10.15px;line-height:12px">KJFK</span><span class="c b" style="left:209.30px;top:8.19px;font-size:10.15px;line-height:12px">250218 03:35</span><span class="c b" style="left:338.35px;top:8.19px;font-size:10.15px;line-height:12px">04:01</span><span class="c n" style="left:381.35px;top:8.19px;font-size:10.15px;line-height:12px">F310</span><span class="c n" style="left:424.35px;top:8.19px;font-size:10.15px;line-height:12px">08:36</span><span class="c n" style="left:467.35px;top:8.19px;font-size:10.15px;line-height:12px">EPWA</span><span class="c b" style="left:503.00px;top:8.19px;font-size:10.15px;line-height:12px">250218 12:37</span><span class="c n" style="left:693.70px;top:8.19px;font-size:10.15px;line-height:12px">SPLRE</span><span class="c r_" style="left:856.30px;top:8.19px;font-size:10.15px;line-height:12px">ACH</span></div>
<div class="r" style="top:622.66px;height:25.78px"><span class="c b" style="left:6.00px;top:8.19px;font-size:10.15px;line-height:12px">LOT98</span><span class="c n" style="left:66.30px;top:8.19px;font-size:10.15px;line-height:12px">I</span><span class="c n" style="left:102.00px;top:8.19px;font-size:10.15px;line-height:12px">S</span><span class="c n" style="left:138.00px;top:8.19px;font-size:10.15px;line-height:12px">B789</span><span class="c n" style="left:173.70px;top:8.19px;font-size:10.15px;line-height:12px">RKSI</span><span class="c b" style="left:209.30px;top:8.19px;font-size:10.15px;line-height:12px">250218 03:35</span><span class="c b" style="left:338.35px;top:8.19px;font-size:10.15px;line-height:12px">04:01</span><span class="c n" style="left:381.35px;top:8.19px;font-size:10.15px;line-height:12px">F240</span><span class="c n" style="left:424.35px;top:8.19px;font-size:10.15px;line-height:12px">12:41</span><span class="c n" style="left:467.35px;top:8.19px;font-size:10.15px;line-height:12px">EPWA</span><span class="c b" style="left:503.00px;top:8.19px;font-size:10.15px;line-height:12px">250218 16:42</span><span class="c n" style="left:693.70px;top:8.19px;font-size:10.15px;line-height:12px">SPLSA</span><span class="c r_" style="left:856.30px;top:8.19px;font-size:10.15px;line-height:12px">DEP</span></div>
</div>
</div>
</body></html>
